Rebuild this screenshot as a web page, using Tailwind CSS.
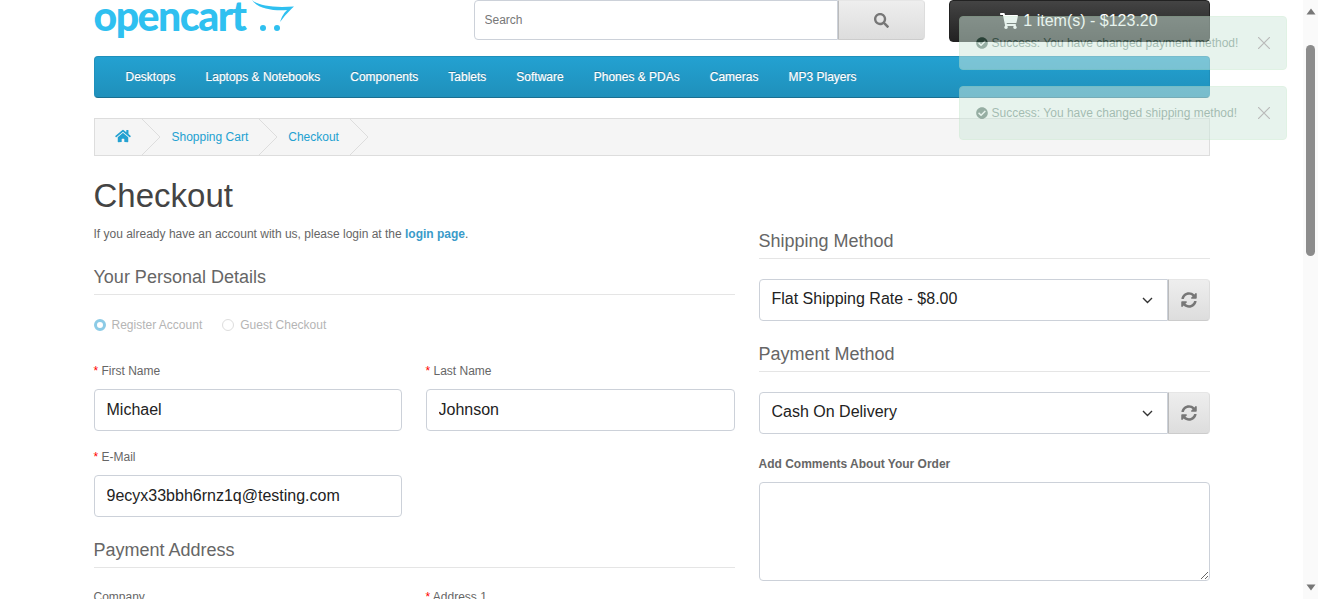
<!DOCTYPE html>
<html lang="en">
  <head>
    <meta charset="UTF-8" />
    <title>Checkout</title>
    <script src="https://cdn.jsdelivr.net/npm/@tailwindcss/browser@4"></script>
  </head>
  <body class="h-screen overflow-hidden bg-white font-['Liberation_Sans',Arial,sans-serif] text-xs text-[#666]">
    <div class="flex h-[599px]">
      <main class="relative h-full w-[1303px] shrink-0 overflow-hidden pl-[93.5px]">
        <div class="w-[1116px]">
          <!-- header -->
          <header class="flex h-[56px] items-start">
            <a class="relative block h-[42px] w-[380px]">
              <span class="block h-[38px] font-['Lato',sans-serif] text-[41px] leading-[32px] font-black tracking-[-1.5px] text-[#2fc0f0]">opencart</span>
              <svg class="absolute top-0 left-[156px]" width="48" height="34" viewBox="0 0 48 34">
                <path d="M2 0C8 6 24 8 44 6.500C37 13 34 17 30 22C32 16 34 13 37 10C24 11 8 9 2 0Z" fill="#2fc0f0" />
                <circle cx="13" cy="28" r="3" fill="#2fc0f0" />
                <circle cx="27" cy="28" r="3" fill="#2fc0f0" />
              </svg>
            </a>
            <div class="flex h-10 w-[451px]">
              <input class="h-10 min-w-0 flex-1 rounded-l-[4px] border border-[#ccd1d9] bg-white px-[10px] text-xs text-[#555] placeholder:text-[#777]" placeholder="Search" />
              <button class="flex h-10 w-[87px] items-center justify-center rounded-r-[4px] border border-l-[#bbb] border-t-[#e6e6e6] border-r-[#ddd] border-b-[#ccc] bg-gradient-to-b from-[#eee] to-[#ddd]">
                <svg class="h-[15px] w-[15px] fill-[#777]" viewBox="0 0 512 512"><path d="M505 442.700L405.300 343c-4.500-4.500-10.600-7-17-7H372c27.600-35.300 44-79.700 44-128C416 93.100 322.900 0 208 0S0 93.100 0 208s93.100 208 208 208c48.300 0 92.700-16.400 128-44v16.300c0 6.400 2.500 12.500 7 17l99.700 99.700c9.400 9.400 24.600 9.400 33.900 0l28.300-28.300c9.400-9.400 9.400-24.600.100-34zM208 336c-70.700 0-128-57.200-128-128 0-70.700 57.200-128 128-128 70.700 0 128 57.200 128 128 0 70.700-57.200 128-128 128z"/></svg>
              </button>
            </div>
            <button class="ml-6 flex h-[42px] w-[261px] items-center justify-center gap-[5px] rounded-[4px] border border-[#222] bg-gradient-to-b from-[#444] to-[#222] text-base text-white">
              <svg class="h-4 w-[18px] fill-white" viewBox="0 0 576 512"><path d="M528.120 301.319l47.273-208C578.806 78.301 567.391 64 551.990 64H159.208l-9.166-44.810C147.758 8.021 137.930 0 126.529 0H24C10.745 0 0 10.745 0 24v16c0 13.255 10.745 24 24 24h69.883l70.248 343.435C147.325 417.100 136 435.222 136 456c0 30.928 25.072 56 56 56s56-25.072 56-56c0-15.674-6.447-29.835-16.824-40h209.647C430.447 426.165 424 440.326 424 456c0 30.928 25.072 56 56 56s56-25.072 56-56c0-22.172-12.888-41.332-31.579-50.405l5.517-24.276c3.413-15.018-8.002-29.319-23.403-29.319H218.117l-6.545-32h293.145c11.206 0 20.920-7.754 23.403-18.681z"/></svg>
              <span>1 item(s) - $123.20</span>
            </button>
          </header>

          <!-- menu -->
          <nav class="flex h-[42px] items-center gap-[30px] rounded-[4px] border border-[#1f90bb] border-b-[#1a6f91] bg-gradient-to-b from-[#23a1d1] to-[#1f90bb] pl-[31px] text-xs text-white [text-shadow:0_-1px_0_rgba(0,0,0,0.25),0_0_1px_rgba(255,255,255,0.6)]">
            <a>Desktops</a>
            <a>Laptops &amp; Notebooks</a>
            <a>Components</a>
            <a>Tablets</a>
            <a>Software</a>
            <a>Phones &amp; PDAs</a>
            <a>Cameras</a>
            <a>MP3 Players</a>
          </nav>

          <!-- breadcrumb -->
          <ul class="mt-5 flex h-[38px] items-stretch border border-[#ddd] bg-[#f5f5f5] text-xs text-[#23a1d1]">
            <li class="flex items-center pl-5">
              <svg class="mb-[3px] h-[14px] w-4 fill-[#23a1d1]" viewBox="0 0 576 512"><path d="M280.370 148.260L96 300.110V464a16 16 0 0 0 16 16l112.060-.29a16 16 0 0 0 15.920-16V368a16 16 0 0 1 16-16h64a16 16 0 0 1 16 16v95.640a16 16 0 0 0 16 16.050L464 480a16 16 0 0 0 16-16V300L295.670 148.260a12.190 12.190 0 0 0-15.300 0zM571.600 251.470L488 182.560V44.050a12 12 0 0 0-12-12h-56a12 12 0 0 0-12 12v72.610L318.470 43a48 48 0 0 0-61 0L4.340 251.470a12 12 0 0 0-1.600 16.900l25.500 31A12 12 0 0 0 45.150 301l235.220-193.740a12.190 12.190 0 0 1 15.300 0L530.900 301a12 12 0 0 0 16.900-1.600l25.500-31a12 12 0 0 0-1.700-16.930z"/></svg>
            </li>
            <li class="ml-[11px] flex"><svg width="19" height="36" viewBox="0 0 19 36" fill="none" stroke="#ddd"><path d="M0 0L18 18L0 36"/></svg></li>
            <li class="ml-[11px] flex items-center">Shopping Cart</li>
            <li class="ml-[11px] flex"><svg width="19" height="36" viewBox="0 0 19 36" fill="none" stroke="#ddd"><path d="M0 0L18 18L0 36"/></svg></li>
            <li class="ml-[10px] flex items-center">Checkout</li>
            <li class="ml-[11px] flex"><svg width="19" height="36" viewBox="0 0 19 36" fill="none" stroke="#ddd"><path d="M0 0L18 18L0 36"/></svg></li>
          </ul>

          <!-- content -->
          <div class="flex gap-6">
            <section class="w-[641px] shrink-0">
              <h1 class="mt-[20px] text-[33px] leading-[40px] text-[#444]">Checkout</h1>
              <p class="mt-[10px] h-[17px] leading-[17px]">If you already have an account with us, please login at the <a class="font-bold text-[#3a9bc9]">login page</a>.</p>
              <h2 class="mt-[20px] h-[32px] border-b border-[#e5e5e5] text-lg leading-[28px] text-[#666]">Your Personal Details</h2>
              <div class="mt-[23px] flex h-[14px] items-center text-xs text-[#b5b5b5]">
                <label class="flex items-center gap-[6px]">
                  <span class="h-3 w-3 rounded-full border-[3px] border-[#8ccbe6] bg-white"></span>Register Account
                </label>
                <label class="ml-5 flex items-center gap-[6px]">
                  <span class="h-3 w-3 rounded-full border border-[#ddd] bg-white"></span>Guest Checkout
                </label>
              </div>
              <div class="mt-[32px] grid grid-cols-[308px_309px] gap-x-6">
                <div>
                  <label class="block h-[14px] leading-[14px]"><span class="text-[#f00]">*</span> First Name</label>
                  <input class="mt-[11px] h-[42px] w-full rounded-[4px] border border-[#ccd1d9] px-3 text-base text-[#222]" value="Michael" />
                </div>
                <div>
                  <label class="block h-[14px] leading-[14px]"><span class="text-[#f00]">*</span> Last Name</label>
                  <input class="mt-[11px] h-[42px] w-full rounded-[4px] border border-[#ccd1d9] px-3 text-base text-[#222]" value="Johnson" />
                </div>
              </div>
              <div class="mt-[19px] w-[308px]">
                <label class="block h-[14px] leading-[14px]"><span class="text-[#f00]">*</span> E-Mail</label>
                <input class="mt-[11px] h-[42px] w-full rounded-[4px] border border-[#ccd1d9] px-3 text-base text-[#222]" value="9ecyx33bbh6rnz1q@testing.com" />
              </div>
              <h2 class="mt-[19px] h-[32px] border-b border-[#e5e5e5] text-lg leading-[28px] text-[#666]">Payment Address</h2>
              <div class="mt-[22px] grid grid-cols-[308px_309px] gap-x-6">
                <label class="block h-[14px] leading-[14px]">Company</label>
                <label class="block h-[14px] leading-[14px]"><span class="text-[#f00]">*</span> Address 1</label>
              </div>
            </section>

            <section class="w-[451px] shrink-0">
              <h2 class="mt-[71px] h-[32px] border-b border-[#e5e5e5] text-lg leading-[28px] text-[#666]">Shipping Method</h2>
              <div class="mt-[20px] flex h-[42px]">
                <div class="relative min-w-0 flex-1">
                  <select class="h-[42px] w-full appearance-none rounded-l-[4px] border border-[#ccd1d9] bg-white px-3 pb-[3px] text-base text-[#222]">
                    <option>Flat Shipping Rate - $8.00</option>
                  </select>
                  <svg class="pointer-events-none absolute top-[18px] right-[15px]" width="11" height="7" viewBox="0 0 11 7" fill="none" stroke="#333" stroke-width="1.400"><path d="M1 1L5.500 5.500L10 1"/></svg>
                </div>
                <button class="flex h-[42px] w-[42px] items-center justify-center rounded-r-[4px] border border-l-[#bbb] border-t-[#e6e6e6] border-r-[#ddd] border-b-[#ccc] bg-gradient-to-b from-[#eee] to-[#ddd]">
                  <svg class="h-4 w-4 fill-[#777]" viewBox="0 0 512 512"><path d="M370.720 133.280C339.458 104.008 298.888 87.962 255.848 88c-77.458.068-144.328 53.178-162.791 126.850-1.344 5.363-6.122 9.150-11.651 9.150H24.103c-7.498 0-13.194-6.807-11.807-14.176C33.933 94.924 134.813 8 256 8c66.448 0 126.791 26.136 171.315 68.685L463.030 40.970C478.149 25.851 504 36.559 504 57.941V192c0 13.255-10.745 24-24 24H345.941c-21.382 0-32.090-25.851-16.971-40.971l41.750-41.749zM32 296h134.059c21.382 0 32.090 25.851 16.971 40.971l-41.750 41.750c31.262 29.273 71.835 45.319 114.876 45.280 77.418-.07 144.315-53.144 162.787-126.849 1.344-5.363 6.122-9.150 11.651-9.150h57.304c7.498 0 13.194 6.807 11.807 14.176C478.067 417.076 377.187 504 256 504c-66.448 0-126.791-26.136-171.315-68.685L48.970 471.030C33.851 486.149 8 475.441 8 454.059V320c0-13.255 10.745-24 24-24z"/></svg>
                </button>
              </div>
              <h2 class="mt-[19px] h-[32px] border-b border-[#e5e5e5] text-lg leading-[28px] text-[#666]">Payment Method</h2>
              <div class="mt-[20px] flex h-[42px]">
                <div class="relative min-w-0 flex-1">
                  <select class="h-[42px] w-full appearance-none rounded-l-[4px] border border-[#ccd1d9] bg-white px-3 pb-[3px] text-base text-[#222]">
                    <option>Cash On Delivery</option>
                  </select>
                  <svg class="pointer-events-none absolute top-[18px] right-[15px]" width="11" height="7" viewBox="0 0 11 7" fill="none" stroke="#333" stroke-width="1.400"><path d="M1 1L5.500 5.500L10 1"/></svg>
                </div>
                <button class="flex h-[42px] w-[42px] items-center justify-center rounded-r-[4px] border border-l-[#bbb] border-t-[#e6e6e6] border-r-[#ddd] border-b-[#ccc] bg-gradient-to-b from-[#eee] to-[#ddd]">
                  <svg class="h-4 w-4 fill-[#777]" viewBox="0 0 512 512"><path d="M370.720 133.280C339.458 104.008 298.888 87.962 255.848 88c-77.458.068-144.328 53.178-162.791 126.850-1.344 5.363-6.122 9.150-11.651 9.150H24.103c-7.498 0-13.194-6.807-11.807-14.176C33.933 94.924 134.813 8 256 8c66.448 0 126.791 26.136 171.315 68.685L463.030 40.970C478.149 25.851 504 36.559 504 57.941V192c0 13.255-10.745 24-24 24H345.941c-21.382 0-32.090-25.851-16.971-40.971l41.750-41.749zM32 296h134.059c21.382 0 32.090 25.851 16.971 40.971l-41.750 41.750c31.262 29.273 71.835 45.319 114.876 45.280 77.418-.07 144.315-53.144 162.787-126.849 1.344-5.363 6.122-9.150 11.651-9.150h57.304c7.498 0 13.194 6.807 11.807 14.176C478.067 417.076 377.187 504 256 504c-66.448 0-126.791-26.136-171.315-68.685L48.970 471.030C33.851 486.149 8 475.441 8 454.059V320c0-13.255 10.745-24 24-24z"/></svg>
                </button>
              </div>
              <label class="mt-[23px] block h-[14px] leading-[14px] font-bold">Add Comments About Your Order</label>
              <textarea class="mt-[11px] block h-[99px] w-full rounded-[4px] border border-[#ccd1d9]"></textarea>
            </section>
          </div>
        </div>

        <!-- toasts -->
        <div class="absolute top-4 left-[959px] flex w-[328px] flex-col gap-4 text-xs text-[#4a7a66]">
          <div class="flex h-[54px] items-center rounded-[4px] border border-[#c3e6cb] bg-[#d1e9dd] pl-4 opacity-50">
            <svg class="h-3 w-3 fill-[#2f5f4a]" viewBox="0 0 512 512"><path d="M504 256c0 136.967-111.033 248-248 248S8 392.967 8 256 119.033 8 256 8s248 111.033 248 248zM227.314 387.314l184-184c6.248-6.248 6.248-16.379 0-22.627l-22.627-22.627c-6.248-6.249-16.379-6.249-22.628 0L216 308.118l-70.059-70.059c-6.248-6.248-16.379-6.248-22.628 0l-22.627 22.627c-6.248 6.248-6.248 16.379 0 22.627l104 104c6.249 6.249 16.379 6.249 22.628.001z"/></svg>
            <span class="ml-[3.5px]">Success: You have changed payment method!</span>
            <svg class="ml-auto mr-[16px] h-3 w-3" viewBox="0 0 12 12" stroke="#777" stroke-width="1.200"><path d="M0 0L12 12M12 0L0 12"/></svg>
          </div>
          <div class="flex h-[54px] items-center rounded-[4px] border border-[#c3e6cb] bg-[#d1e9dd] pl-4 opacity-50">
            <svg class="h-3 w-3 fill-[#2f5f4a]" viewBox="0 0 512 512"><path d="M504 256c0 136.967-111.033 248-248 248S8 392.967 8 256 119.033 8 256 8s248 111.033 248 248zM227.314 387.314l184-184c6.248-6.248 6.248-16.379 0-22.627l-22.627-22.627c-6.248-6.249-16.379-6.249-22.628 0L216 308.118l-70.059-70.059c-6.248-6.248-16.379-6.248-22.628 0l-22.627 22.627c-6.248 6.248-6.248 16.379 0 22.627l104 104c6.249 6.249 16.379 6.249 22.628.001z"/></svg>
            <span class="ml-[3.5px]">Success: You have changed shipping method!</span>
            <svg class="ml-auto mr-[16px] h-3 w-3" viewBox="0 0 12 12" stroke="#777" stroke-width="1.200"><path d="M0 0L12 12M12 0L0 12"/></svg>
          </div>
        </div>
      </main>

      <!-- scrollbar -->
      <div class="relative h-full flex-1 bg-[#fafafa]">
        <svg class="absolute top-[8px] left-[3px]" width="10" height="7" viewBox="0 0 10 7" fill="#777"><path d="M5 0.500L9.500 6.500H0.500Z"/></svg>
        <div class="absolute top-[45px] left-[3px] h-[211px] w-[9px] rounded-[5px] bg-[#8c8c8c]"></div>
        <svg class="absolute bottom-[8px] left-[3px]" width="10" height="7" viewBox="0 0 10 7" fill="#777"><path d="M5 6.500L9.500 0.500H0.500Z"/></svg>
      </div>
    </div>
  </body>
</html>
